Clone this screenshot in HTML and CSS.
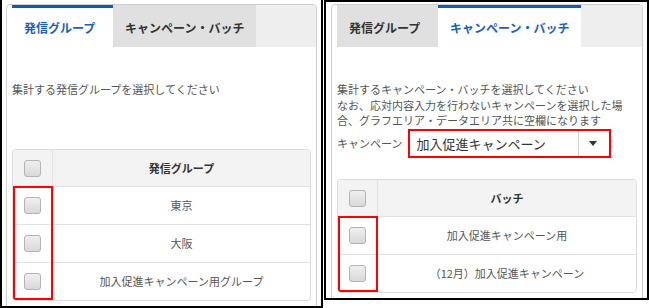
FILE: index.html
```html
<!DOCTYPE html>
<html lang="ja">
<head>
  <meta charset="UTF-8">
  <title>集計対象の選択</title>
  <link rel="stylesheet" href="styles.css">
</head>
<body>
  <div class="shot shot-left">
    <div class="panel">
      <ul class="tabs">
        <li class="tab tab-group active">発信グループ</li>
        <li class="tab">キャンペーン・バッチ</li>
      </ul>
      <div class="panel-body">
        <p class="note">集計する発信グループを選択してください</p>
        <div class="grid grid-group">
          <table>
            <tr class="head">
              <th class="check"><span class="cb"></span></th>
              <th>発信グループ</th>
            </tr>
            <tr><td class="check"><span class="cb"></span></td><td>東京</td></tr>
            <tr><td class="check"><span class="cb"></span></td><td>大阪</td></tr>
            <tr><td class="check"><span class="cb"></span></td><td>加入促進キャンペーン用グループ</td></tr>
          </table>
          <div class="mark"></div>
        </div>
      </div>
    </div>
  </div>

  <div class="shot shot-right">
    <div class="panel">
      <ul class="tabs">
        <li class="tab tab-group">発信グループ</li>
        <li class="tab active">キャンペーン・バッチ</li>
      </ul>
      <div class="panel-body">
        <p class="note">集計するキャンペーン・バッチを選択してください<br>なお、応対内容入力を行わないキャンペーンを選択した場<br>合、グラフエリア・データエリア共に空欄になります</p>
        <div class="field">
          <span class="field-label">キャンペーン</span>
          <div class="select">
            <span class="select-value">加入促進キャンペーン</span>
            <span class="select-arrow"></span>
          </div>
        </div>
        <div class="grid grid-batch">
          <table>
            <tr class="head">
              <th class="check"><span class="cb"></span></th>
              <th>バッチ</th>
            </tr>
            <tr><td class="check"><span class="cb"></span></td><td>加入促進キャンペーン用</td></tr>
            <tr><td class="check"><span class="cb"></span></td><td>（12月）加入促進キャンペーン</td></tr>
          </table>
          <div class="mark"></div>
        </div>
      </div>
    </div>
  </div>
</body>
</html>
```

FILE: styles.css
```css
body {
  margin: 0;
  display: flex;
  align-items: flex-start;
  gap: 1px;
  background: #fff;
  color: #555;
  font-family: "Noto Sans CJK JP", "Noto Sans", sans-serif;
  font-size: 11px;
}

/* the two captured windows */
.shot {
  box-sizing: border-box;
  overflow: hidden;
  border: 2px solid #000;
}
.shot-left {
  width: 323px;
  height: 308px;
  border-top: none;
  padding: 4px 4px 0 4px;
}
.shot-right {
  width: 325px;
  height: 300px;
  padding: 2px 4px 0 5px;
}

.panel {
  height: 400px;
  border: 1px solid #cfcfcf;
  border-radius: 4px;
  background: #fff;
}

/* tabs */
.tabs {
  display: flex;
  margin: 0;
  padding: 0 0 0 5px;
  list-style: none;
  height: 42px;
}
.tabs::after {
  content: "";
  flex: 1;
  background: #eeeeee;
  border-top-right-radius: 3px;
}
.tab {
  display: flex;
  align-items: center;
  padding: 0 12px;
  border-top: 3px solid transparent;
  background: #e0e0e0;
  color: #333;
  font-size: 12px;
  font-weight: bold;
}
.tab-group { width: 77px; }
.tab.active {
  background: #fff;
  color: #1a62b8;
  border-top-color: #0b5cb5;
}

.panel-body { padding: 0 5px; }

.note {
  margin: 35px 0 0;
  line-height: 15.5px;
}

/* campaign select */
.field {
  display: flex;
  align-items: center;
  gap: 6px;
}
.field-label { line-height: 29px; }
.select {
  box-sizing: border-box;
  display: flex;
  align-items: stretch;
  width: 203px;
  height: 29px;
  border: 2px solid #f00;
  background: #fff;
}
.select-value {
  flex: 1;
  padding-left: 6px;
  color: #333;
  font-size: 13px;
  line-height: 25px;
}
.select-arrow {
  position: relative;
  width: 30px;
  border-left: 1px solid #d4d4d4;
}
.select-arrow::after {
  content: "";
  position: absolute;
  left: 10px;
  top: 10px;
  border-left: 4px solid transparent;
  border-right: 4px solid transparent;
  border-top: 5px solid #333;
}

/* check tables */
.grid {
  position: relative;
  border: 1px solid #dcdcdc;
  border-radius: 4px;
  overflow: hidden;
}
.grid-group { margin-top: 51px; }
.grid-batch { margin-top: 21px; }

table {
  width: 100%;
  border-collapse: collapse;
}
th, td {
  height: 37px;
  padding: 0;
  text-align: center;
  border-top: 1px solid #e2e2e2;
}
tr.head th {
  height: 36px;
  border-top: none;
  background: #f3f3f3;
  color: #333;
  font-weight: bold;
}
.check {
  width: 39px;
  border-right: 1px solid #e2e2e2;
}

.cb {
  display: inline-block;
  box-sizing: border-box;
  width: 17px;
  height: 17px;
  vertical-align: middle;
  border: 1px solid #b4b4b4;
  border-radius: 3px;
  background: linear-gradient(#efefef, #d9d9d9);
}

/* red annotation round the row checkboxes */
.mark {
  position: absolute;
  left: 0;
  top: 36px;
  bottom: 0;
  width: 40px;
  box-sizing: border-box;
  border: 2px solid #f00;
}
```
